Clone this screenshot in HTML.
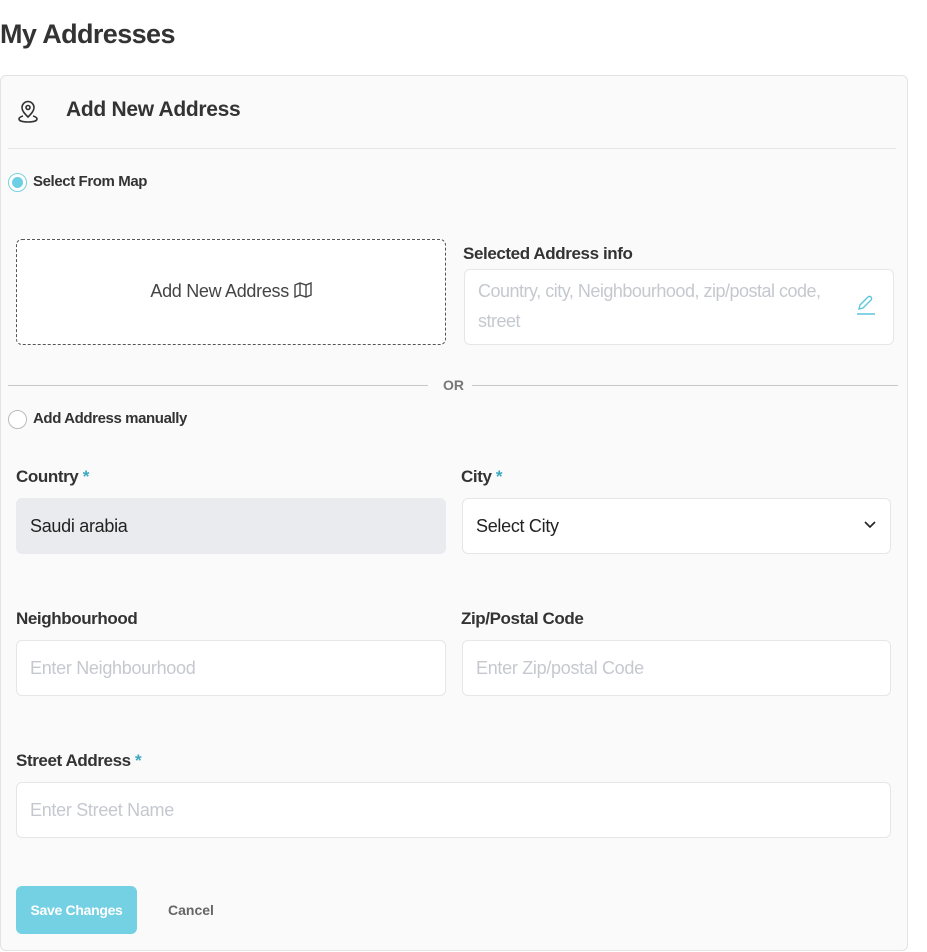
<!DOCTYPE html>
<html><head><meta charset="utf-8"><style>
*{box-sizing:border-box;margin:0;padding:0}
body{width:927px;height:952px;background:#fff;font-family:"Liberation Sans",sans-serif;color:#333;position:relative;overflow:hidden}
.abs{position:absolute}
h1{position:absolute;left:0;top:19px;font-size:27px;font-weight:bold;color:#333;letter-spacing:-0.6px}
.card{position:absolute;left:0;top:75px;width:908px;height:876px;border:1px solid #e3e3e3;border-radius:6px;background:#fafafa}
.in{position:absolute;left:-1px;top:0;width:908px;height:876px}
.lbl{position:absolute;font-size:17px;font-weight:bold;color:#333;letter-spacing:-0.4px}
.lbl b{color:#3aa7c0}
.inp{position:absolute;height:56px;border:1px solid #e6e6e6;border-radius:6px;background:#fff;font-size:18px;color:#c5c9cf;padding:0 13px;line-height:54px;letter-spacing:-0.3px}
.radio{position:absolute;width:19px;height:19px;border-radius:50%;border:1px solid #bbb;background:#fff}
</style></head><body>
<h1>My Addresses</h1>
<div class="card"><div class="in">
 <svg class="abs" style="left:17px;top:24px" width="22" height="24" viewBox="0 0 22 24" fill="none" stroke="#333" stroke-width="1.6"><path d="M11 17c-4-4-6-6.5-6-9.5a6 6 0 0 1 12 0c0 3-2 5.5-6 9.5z"/><circle cx="11" cy="7.5" r="2"/><path d="M6 16c-2.5.7-4 1.8-4 3 0 2 4 3 9 3s9-1 9-3c0-1.2-1.5-2.3-4-3"/></svg>
 <div class="abs" style="left:66px;top:22px;font-size:21px;font-weight:bold;color:#333;letter-spacing:-0.3px">Add New Address</div>
 <div class="abs" style="left:8px;top:72px;width:888px;height:1px;background:#e6e6e6"></div>
 <div class="radio" style="left:8px;top:97px;border-color:#7bd0e0"><div style="position:absolute;left:3px;top:3px;width:11px;height:11px;border-radius:50%;background:#6ccfe3"></div></div>
 <div class="lbl" style="left:33px;top:97px;font-size:15px">Select From Map</div>
 <div class="abs" style="left:16px;top:163px;width:430px;height:106px;border:1px dashed #555;border-radius:6px;background:#fff;text-align:center;line-height:102px;font-size:18px;color:#444;letter-spacing:-0.3px">Add New Address <svg width="18" height="16" viewBox="0 0 18 16" fill="none" stroke="#444" stroke-width="1.4" style="vertical-align:-1px"><path d="M1 3l5-2 6 2 5-2v12l-5 2-6-2-5 2z M6 1v12 M12 3v12"/></svg></div>
 <div class="lbl" style="left:463px;top:168px">Selected Address info</div>
 <div class="inp" style="left:464px;top:193px;width:430px;height:76px;line-height:30px;padding-top:6px;letter-spacing:-0.5px">Country, city, Neighbourhood, zip/postal code,<br>street</div>
 <svg class="abs" style="left:856px;top:218px" width="20" height="22" viewBox="0 0 20 22" fill="none" stroke="#5cc6dc" stroke-width="1.4"><path d="M3 15l1-4 8-8a2 2 0 0 1 3 3l-8 8z"/><path d="M1 20h18"/></svg>
 <div class="abs" style="left:8px;top:309px;width:420px;height:1px;background:#c8c8c8"></div>
 <div class="abs" style="left:443px;top:301px;font-size:14px;font-weight:bold;color:#777">OR</div>
 <div class="abs" style="left:472px;top:309px;width:426px;height:1px;background:#c8c8c8"></div>
 <div class="radio" style="left:8px;top:334px"></div>
 <div class="lbl" style="left:33px;top:334px;font-size:15px">Add Address manually</div>
 <div class="lbl" style="left:16px;top:391px">Country <b>*</b></div>
 <div class="lbl" style="left:461px;top:391px">City <b>*</b></div>
 <div class="inp" style="left:16px;top:422px;width:430px;background:#e9ebee;color:#222;border-color:#e9ebee">Saudi arabia</div>
 <div class="inp" style="left:462px;top:422px;width:429px;color:#222">Select City<svg class="abs" style="right:14px;top:22px" width="12" height="8" viewBox="0 0 12 8" fill="none" stroke="#222" stroke-width="1.6"><path d="M1 1l5 5 5-5"/></svg></div>
 <div class="lbl" style="left:16px;top:533px">Neighbourhood</div>
 <div class="lbl" style="left:461px;top:533px">Zip/Postal Code</div>
 <div class="inp" style="left:16px;top:564px;width:430px">Enter Neighbourhood</div>
 <div class="inp" style="left:462px;top:564px;width:429px">Enter Zip/postal Code</div>
 <div class="lbl" style="left:16px;top:675px">Street Address <b>*</b></div>
 <div class="inp" style="left:16px;top:706px;width:875px">Enter Street Name</div>
 <div class="abs" style="left:16px;top:810px;width:121px;height:48px;border-radius:6px;background:#74d0e3;color:#fff;font-size:14px;font-weight:bold;text-align:center;line-height:48px;letter-spacing:-0.3px">Save Changes</div>
 <div class="abs" style="left:168px;top:826px;font-size:14px;font-weight:bold;color:#666">Cancel</div>
</div></div>
</body></html>
